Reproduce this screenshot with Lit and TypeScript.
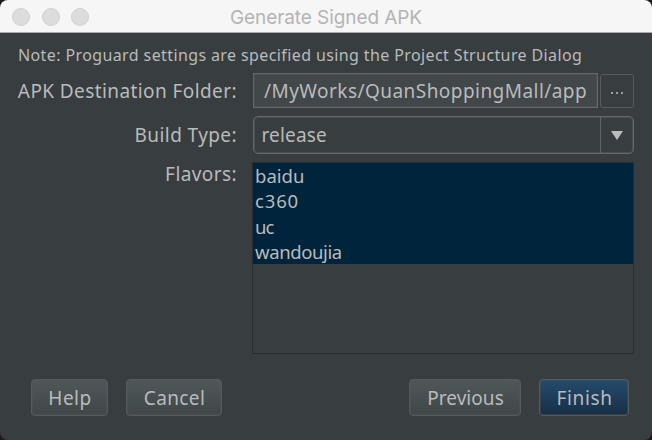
import { LitElement, html, css } from "lit";
import { customElement, property, state } from "lit/decorators.js";
import { classMap } from "lit/directives/class-map.js";
import { styleMap } from "lit/directives/style-map.js";

@customElement("dialog-button")
class DialogButton extends LitElement {
  @property({ type: Boolean }) primary = false;

  static styles = css`
    :host { display: block; }
    .btn {
      box-sizing: border-box;
      width: 100%;
      height: 37px;
      padding: 0 0 0 1px;
      border: 1px solid #565a5c;
      border-radius: 4px;
      background: linear-gradient(#4f5759, #404749);
      box-shadow: inset 0 0 0 1px rgba(86, 90, 92, 0.35);
      color: #b9bbbc;
      font: 19px/34px "Noto Sans", sans-serif;
      letter-spacing: var(--track, 0.5px);
      text-align: center;
      display: block;
    }
    .primary { background: linear-gradient(#254b6d, #172f46); }
  `;

  render() {
    return html`<button class=${classMap({ btn: true, primary: this.primary })}><slot></slot></button>`;
  }
}

@customElement("app-root")
class AppRoot extends LitElement {
  @state() flavors = [
    { name: "baidu", track: 0 },
    { name: "c360", track: 0.85 },
    { name: "uc", track: -0.9 },
    { name: "wandoujia", track: -0.38 },
  ];

  static styles = css`
    :host {
      display: block;
      width: 652px;
      height: 440px;
      overflow: hidden;
      background: #1d1b1e;
      font-family: "Noto Sans", sans-serif;
    }
    .window {
      height: 440px;
      border-radius: 8px;
      overflow: hidden;
      background: #383d3f;
      color: #b9bbbc;
      font-size: 19px;
      line-height: 26px;
      white-space: nowrap;
    }
    .titlebar {
      box-sizing: border-box;
      height: 33px;
      padding: 0 12px;
      border-bottom: 1px solid #a9aaaa;
      background: #f6f6f6;
      display: grid;
      grid-template-columns: 1fr auto 1fr;
      align-items: center;
    }
    .lights { display: flex; gap: 11.5px; }
    .light {
      box-sizing: border-box;
      width: 18px;
      height: 18px;
      border: 1px solid #d0d0d0;
      border-radius: 50%;
      background: #dcdcdc;
    }
    .title {
      color: #b4b4b4;
      font: 19px/32px Inter, sans-serif;
      letter-spacing: -0.08px;
      padding-top: 2px;
    }
    .note {
      padding: 10px 0 0 18px;
      font-size: 16px;
      line-height: 24px;
      letter-spacing: 0.39px;
    }
    .form {
      display: grid;
      grid-template-columns: 237px 382px;
      column-gap: 15px;
      grid-template-rows: 35px 38px 192px;
      row-gap: 8px;
      padding-top: 6px;
    }
    .label { text-align: right; letter-spacing: 0.41px; padding-top: 5px; }
    .type { padding-top: 6px; }
    .flavors { padding-top: 0; margin-top: -1px; }
    .folder { display: flex; gap: 2px; padding-left: 1px; }
    .path {
      box-sizing: border-box;
      width: 345px;
      height: 35px;
      border: 1px solid #656768;
      box-shadow: inset 0 0 0 1px #4b4f51;
      background: #424749;
      padding-left: 10px;
      line-height: 34px;
      letter-spacing: 0.45px;
    }
    .browse {
      box-sizing: border-box;
      width: 34px;
      height: 34px;
      margin-top: 1px;
      border: 1px solid #585c5d;
      border-radius: 3px;
      display: flex;
      gap: 3px;
      align-items: center;
      justify-content: center;
    }
    .dot { width: 2px; height: 2px; background: #9b9d9e; margin-top: 3px; }
    .combo {
      box-sizing: border-box;
      margin-left: 1px;
      border: 1px solid #666869;
      box-shadow: inset 0 0 0 1px #4b4f51;
      border-radius: 5px;
      display: grid;
      grid-template-columns: 1fr 33px;
      line-height: 36px;
      letter-spacing: 0.15px;
      padding-left: 7.5px;
    }
    .arrow {
      box-sizing: border-box;
      border-left: 1px solid #626566;
      display: flex;
      align-items: center;
      justify-content: center;
    }
    .list {
      box-sizing: border-box;
      border: 1px solid #292c2e;
    }
    .item {
      height: 25.25px;
      line-height: 25px;
      font-size: 18.5px;
      padding-left: 2px;
      background: #00243b;
    }
    .footer { display: flex; justify-content: space-between; padding: 25px 23px 0 31px; }
    .left, .right { display: flex; gap: 18px; }
    .help { width: 77px; --track: 0.5px; }
    .cancel { width: 96px; --track: 0.4px; }
    .prev { width: 112px; --track: 0.05px; }
    .finish { width: 90px; --track: 0.65px; }
  `;

  render() {
    return html`
      <div class="window">
        <div class="titlebar">
          <div class="lights">
            <span class="light"></span><span class="light"></span><span class="light"></span>
          </div>
          <div class="title">Generate Signed APK</div>
          <div></div>
        </div>
        <div class="note">Note: Proguard settings are specified using the Project Structure Dialog</div>
        <div class="form">
          <div class="label">APK Destination Folder:</div>
          <div class="folder">
            <div class="path">/MyWorks/QuanShoppingMall/app</div>
            <div class="browse"><i class="dot"></i><i class="dot"></i><i class="dot"></i></div>
          </div>
          <div class="label type">Build Type:</div>
          <div class="combo">
            <span>release</span>
            <span class="arrow">
              <svg width="12" height="9" viewBox="0 0 12 9"><path d="M0 0H12L6 9Z" fill="#bbbbbb" /></svg>
            </span>
          </div>
          <div class="label flavors">Flavors:</div>
          <div class="list">
            ${this.flavors.map(
              (f) => html`<div class="item" style=${styleMap({ letterSpacing: `${f.track}px` })}>${f.name}</div>`
            )}
          </div>
        </div>
        <div class="footer">
          <div class="left">
            <dialog-button class="help">Help</dialog-button>
            <dialog-button class="cancel">Cancel</dialog-button>
          </div>
          <div class="right">
            <dialog-button class="prev">Previous</dialog-button>
            <dialog-button class="finish" primary>Finish</dialog-button>
          </div>
        </div>
      </div>
    `;
  }
}
